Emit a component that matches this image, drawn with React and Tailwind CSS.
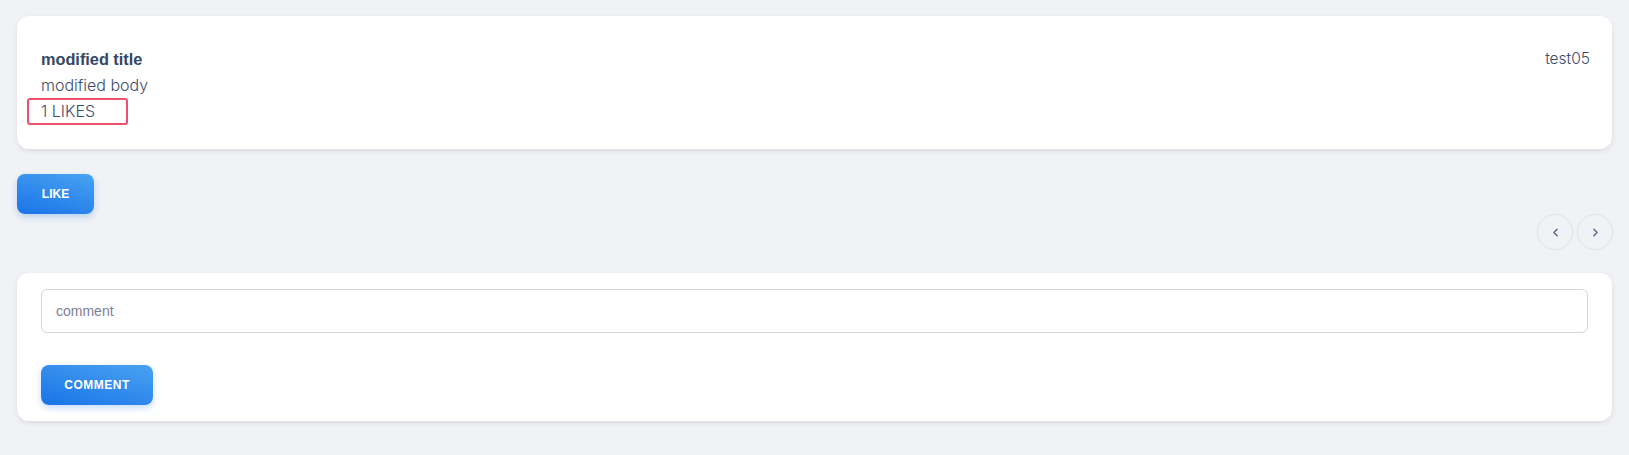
import { ChevronLeft, ChevronRight } from 'lucide-react'

export default function App() {
  return (
    <div className="min-h-[455px] bg-[#f0f2f5] px-[17px] pt-4 pb-8 font-['Liberation_Sans',sans-serif]">
      <div className="bg-white rounded-xl shadow-[0_2px_6px_-1px_rgba(0,0,0,0.12)] pl-6 pr-[22px] pt-[30px] pb-6 flex justify-between">
        <div className="flex flex-col">
          <h1 className="text-[16.3px] leading-[26px] font-bold text-[#344767]">modified title</h1>
          <p className="text-base leading-[26px] font-light font-['Inter',sans-serif] text-[#3d4b6b]">modified body</p>
          <div className="-ml-[14px] w-[101px] h-[27px] border-2 border-[#f0506e] rounded-[3px] pl-3 text-base leading-[23px] font-light font-['Inter',sans-serif] text-[#3d4b6b]">
            1 LIKES
          </div>
        </div>
        <span className="text-[15.5px] leading-[26px] font-light font-['Inter',sans-serif] text-[#3d4b6b]">test05</span>
      </div>

      <button className="mt-[25px] w-[77px] h-10 rounded-lg bg-[linear-gradient(195deg,#49a3f1,#1a73e8)] text-white text-xs font-bold uppercase shadow-[0_3px_6px_rgba(26,115,232,0.25)]">
        Like
      </button>

      <div className="flex justify-end gap-1 -mr-px">
        <button className="w-9 h-9 rounded-full border border-[#dee2e6] flex items-center justify-center text-[#5a6384]">
          <ChevronLeft size={13} strokeWidth={2.5} />
        </button>
        <button className="w-9 h-9 rounded-full border border-[#dee2e6] flex items-center justify-center text-[#5a6384]">
          <ChevronRight size={13} strokeWidth={2.5} />
        </button>
      </div>

      <div className="mt-[23px] bg-white rounded-xl shadow-[0_2px_6px_-1px_rgba(0,0,0,0.12)] pl-6 pr-[24px] py-4">
        <input
          placeholder="comment"
          className="w-full h-11 border border-[#d2d6da] rounded-md px-[14px] text-sm text-[#344767] placeholder:text-[#7b809a] outline-none"
        />
        <button className="mt-8 w-[112px] h-10 rounded-lg bg-[linear-gradient(195deg,#49a3f1,#1a73e8)] text-white text-xs font-bold uppercase tracking-[0.5px] shadow-[0_3px_6px_rgba(26,115,232,0.25)]">
          Comment
        </button>
      </div>
    </div>
  )
}
